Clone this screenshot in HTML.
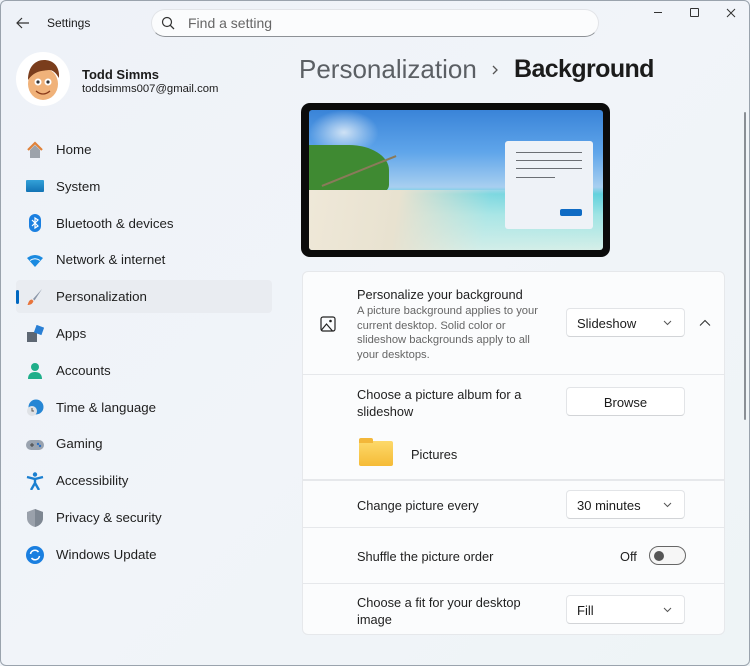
<!DOCTYPE html>
<html><head><style>
*{margin:0;padding:0;box-sizing:border-box}
body{width:750px;height:666px;overflow:hidden;font-family:"Liberation Sans",sans-serif;background:linear-gradient(135deg,#eef2f8 0%,#f1f4f9 50%,#eef4f6 100%);position:relative;color:#1b1b1b}
.abs{position:absolute}
.nav{position:absolute;left:56px;font-size:13.3px;color:#1f1f1f}
.ic{position:absolute;left:26px;width:18px;height:18px}
.card{position:absolute;left:302px;width:423px;background:#fbfcfd;border:1px solid #e6e8eb}
.t{position:absolute;left:54px;font-size:12.8px;color:#1f1f1f}
.dd{position:absolute;left:263px;width:119px;height:29px;background:#fff;border:1px solid #e2e4e7;border-bottom-color:#d2d4d7;border-radius:4px;font-size:13px;padding:7px 10px}
.dd svg{position:absolute;right:12px;top:11px}
</style></head><body>
<div class="abs" style="left:0;top:0;width:750px;height:666px;border:1px solid #9aa3ad;border-radius:6px"></div>
<svg class="abs" style="left:15px;top:16px" width="16" height="14"><path d="M14 7H2M7 2L2 7l5 5" stroke="#333" stroke-width="1.2" fill="none"/></svg>
<div class="abs" style="left:47px;top:16px;font-size:12px">Settings</div>
<div class="abs" style="left:151px;top:9px;width:448px;height:28px;background:#fbfcfd;border:1px solid #e2e4e8;border-bottom:1px solid #8d9196;border-radius:14px"></div>
<svg class="abs" style="left:161px;top:16px" width="14" height="14"><circle cx="6" cy="6" r="4.5" stroke="#333" stroke-width="1.2" fill="none"/><path d="M9.3 9.3L13 13" stroke="#333" stroke-width="1.3"/></svg>
<div class="abs" style="left:188px;top:15px;font-size:14px;color:#666">Find a setting</div>
<div class="abs" style="left:654px;top:12px;width:8px;height:1px;background:#333"></div>
<div class="abs" style="left:690px;top:8px;width:9px;height:9px;border:1px solid #333;border-radius:1px"></div>
<svg class="abs" style="left:726px;top:8px" width="10" height="10"><path d="M1 1l8 8M9 1l-8 8" stroke="#333" stroke-width="1"/></svg>
<div class="abs" style="left:16px;top:52px;width:54px;height:54px;border-radius:50%;background:#fff"></div>
<svg class="abs" style="left:16px;top:52px" width="54" height="54"><ellipse cx="27" cy="32" rx="15" ry="16" fill="#f0b27a"/><path d="M12 28c0-14 8-20 16-20s16 5 15 18c-3-5-6-8-10-8-6 1-14 0-21 10z" fill="#7a3d1c"/><circle cx="22" cy="30" r="3.5" fill="#fff"/><circle cx="32" cy="30" r="3.5" fill="#fff"/><circle cx="22" cy="30" r="1.6" fill="#333"/><circle cx="32" cy="30" r="1.6" fill="#333"/><path d="M20 39q7 6 14 0" stroke="#8a3b1b" stroke-width="1.3" fill="none"/></svg>
<div class="abs" style="left:82px;top:67px;font-size:13px;font-weight:bold">Todd Simms</div>
<div class="abs" style="left:82px;top:83px;font-size:11.3px">toddsimms007@gmail.com</div>
<div class="abs" style="left:16px;top:280px;width:256px;height:33px;background:#e9ecf1;border-radius:4px"></div>
<div class="abs" style="left:16px;top:290px;width:3px;height:14px;background:#0067c0;border-radius:2px"></div>
<svg class="ic" style="top:141px" viewBox="0 0 18 18"><path d="M2 9L9 2l7 7" stroke="#e0823a" stroke-width="2.2" fill="none"/><path d="M4 9v8h10V9L9 4z" fill="#9da3ab"/></svg>
<div class="ic" style="top:180px;height:12px;background:linear-gradient(#33a1d8,#1273b4);border-radius:1px"></div>
<svg class="ic" style="top:214px" viewBox="0 0 18 18"><rect x="3" y="0" width="12" height="18" rx="6" fill="#1a7fe0"/><path d="M6 6l6 6-3 2V4l3 2-6 6" stroke="#fff" stroke-width="1.2" fill="none"/></svg>
<svg class="ic" style="top:252px" viewBox="0 0 18 18"><path d="M1 6q8-6 16 0L9 15z" fill="#1a8ae0"/><path d="M4 8.5q5-3.5 10 0" stroke="#fff" stroke-width="1" fill="none"/></svg>
<svg class="ic" style="top:288px" viewBox="0 0 18 18"><path d="M16 1L7 11l1.5 1.5z" fill="#8b96a8"/><path d="M6 11.5l1.5 1.5c-1 3-3 4-6 4 1-2 1-5 4.5-5.5z" fill="#e8743b"/></svg>
<svg class="ic" style="top:325px" viewBox="0 0 18 18"><rect x="1" y="7" width="10" height="10" fill="#5e6773"/><rect x="9" y="1" width="8" height="8" transform="rotate(20 13 5)" fill="#2a7fd4"/></svg>
<svg class="ic" style="top:362px" viewBox="0 0 18 18"><circle cx="9" cy="5" r="4" fill="#1fae8a"/><path d="M2 17c0-5 3-7 7-7s7 2 7 7z" fill="#1fae8a"/></svg>
<svg class="ic" style="top:399px" viewBox="0 0 18 18"><circle cx="10" cy="8" r="7.5" fill="#2686d4"/><circle cx="6" cy="12" r="5" fill="#dfe2e6"/><path d="M6 9v3h2" stroke="#555" stroke-width="1" fill="none"/></svg>
<svg class="ic" style="top:436px" viewBox="0 0 18 18"><rect x="0" y="4" width="18" height="10" rx="5" fill="#9aa3af"/><circle cx="12" cy="8" r="1.2" fill="#2d6fc1"/><circle cx="14" cy="10" r="1.2" fill="#2d6fc1"/><path d="M4 9h4M6 7v4" stroke="#444" stroke-width="1"/></svg>
<svg class="ic" style="top:472px" viewBox="0 0 18 18"><circle cx="9" cy="2.5" r="2.2" fill="#1a7fd0"/><path d="M1 5l8 2 8-2M9 7v4l-4 7M9 11l4 7" stroke="#1a7fd0" stroke-width="2.4" fill="none"/></svg>
<svg class="ic" style="top:509px" viewBox="0 0 18 18"><path d="M9 0l8 3v6c0 5-4 8-8 9-4-1-8-4-8-9V3z" fill="#9aa1ab"/><path d="M9 0l8 3v6c0 5-4 8-8 9z" fill="#7e8792"/></svg>
<svg class="ic" style="top:546px" viewBox="0 0 18 18"><circle cx="9" cy="9" r="9" fill="#1a7fe0"/><path d="M4.5 8a4.5 4.5 0 0 1 8-2M13.5 10a4.5 4.5 0 0 1-8 2" stroke="#fff" stroke-width="1.5" fill="none"/></svg>
<div class="nav" style="top:142px">Home</div>
<div class="nav" style="top:179px">System</div>
<div class="nav" style="top:216px">Bluetooth &amp; devices</div>
<div class="nav" style="top:252px">Network &amp; internet</div>
<div class="nav" style="top:289px">Personalization</div>
<div class="nav" style="top:326px">Apps</div>
<div class="nav" style="top:363px">Accounts</div>
<div class="nav" style="top:400px">Time &amp; language</div>
<div class="nav" style="top:436px">Gaming</div>
<div class="nav" style="top:473px">Accessibility</div>
<div class="nav" style="top:510px">Privacy &amp; security</div>
<div class="nav" style="top:547px">Windows Update</div>
<div class="abs" style="left:299px;top:54px;font-size:26px;color:#5b5f64">Personalization</div>
<svg class="abs" style="left:490px;top:64px" width="10" height="12"><path d="M3 2l4 4-4 4" stroke="#555" stroke-width="1.3" fill="none"/></svg>
<div class="abs" style="left:514px;top:55px;font-size:25px;font-weight:bold;letter-spacing:-0.6px;color:#1b1b1b">Background</div>
<div class="abs" style="left:301px;top:103px;width:309px;height:154px;background:#0b0b0b;border-radius:9px"></div>
<div class="abs" style="left:309px;top:110px;width:294px;height:140px;border-radius:3px;overflow:hidden;background:linear-gradient(180deg,#3a84d8 0%,#5fa5ea 30%,#a8cff0 55%,#5fd0dc 60%,#9ee4e4 75%,#d6efe8 100%)">
<div class="abs" style="left:0;top:0;width:70px;height:45px;background:radial-gradient(#cfe2f5,transparent 70%)"></div>
<div class="abs" style="left:0;top:35px;width:80px;height:50px;border-radius:0 50% 20% 0;background:#3f8a32"></div>
<div class="abs" style="left:10px;top:60px;width:80px;height:2px;background:#8a7a5a;transform:rotate(-22deg)"></div>
<div class="abs" style="left:0;top:80px;width:294px;height:60px;background:linear-gradient(100deg,#efe8d8 0%,#e8e2d0 30%,rgba(200,235,235,0.3) 60%,transparent)"></div>
<div class="abs" style="left:196px;top:31px;width:88px;height:88px;background:#eef2f7;border-radius:3px"></div>
<div class="abs" style="left:207px;top:42px;width:66px;height:1px;background:#6b6f74"></div>
<div class="abs" style="left:207px;top:50px;width:66px;height:1px;background:#6b6f74"></div>
<div class="abs" style="left:207px;top:58px;width:66px;height:1px;background:#6b6f74"></div>
<div class="abs" style="left:207px;top:67px;width:39px;height:1px;background:#6b6f74"></div>
<div class="abs" style="left:251px;top:99px;width:22px;height:7px;background:#0f6bc4;border-radius:2px"></div>
</div>
<div class="card" style="top:271px;height:104px;border-radius:6px 6px 0 0">
<svg class="abs" style="left:17px;top:44px" width="16" height="16"><rect x="1" y="1" width="14" height="14" rx="2" stroke="#222" stroke-width="1.2" fill="none"/><circle cx="10.5" cy="5" r="1.3" fill="#222"/><path d="M1.5 14l5-6 6 7" stroke="#222" stroke-width="1.2" fill="none"/></svg>
<div class="t" style="top:15px">Personalize your background</div>
<div class="t" style="top:32px;font-size:11.2px;color:#666;line-height:14.6px;width:190px">A picture background applies to your current desktop. Solid color or slideshow backgrounds apply to all your desktops.</div>
<div class="dd" style="top:36px">Slideshow<svg width="9" height="6"><path d="M1 1l3.5 3.5L8 1" stroke="#555" fill="none"/></svg></div>
<svg class="abs" style="left:396px;top:47px" width="12" height="8"><path d="M1 6.5l5-5 5 5" stroke="#333" stroke-width="1.1" fill="none"/></svg>
</div>
<div class="card" style="top:374px;height:106px">
<div class="t" style="top:11px;line-height:17px;width:190px">Choose a picture album for a slideshow</div>
<div class="dd" style="top:12px;text-align:center;padding-left:0;padding-right:0">Browse</div>
<div class="abs" style="left:56px;top:66px;width:34px;height:25px;background:linear-gradient(#fdd96a,#f5bb37);border-radius:2px"></div>
<div class="abs" style="left:56px;top:63px;width:14px;height:5px;background:#f3b73a;border-radius:2px 2px 0 0"></div>
<div class="t" style="left:108px;top:72px">Pictures</div>
</div>
<div class="card" style="top:480px;height:48px">
<div class="t" style="top:17px">Change picture every</div>
<div class="dd" style="top:9px">30 minutes<svg width="9" height="6"><path d="M1 1l3.5 3.5L8 1" stroke="#555" fill="none"/></svg></div>
</div>
<div class="card" style="top:527px;height:57px">
<div class="t" style="top:21px">Shuffle the picture order</div>
<div class="t" style="left:317px;top:21px">Off</div>
<div class="abs" style="left:346px;top:18px;width:37px;height:19px;border:1px solid #666;border-radius:10px;background:#f6f6f6"></div>
<div class="abs" style="left:351px;top:23px;width:10px;height:10px;border-radius:50%;background:#555"></div>
</div>
<div class="card" style="top:583px;height:52px;border-radius:0 0 6px 6px">
<div class="t" style="top:10px;line-height:17px;width:190px">Choose a fit for your desktop image</div>
<div class="dd" style="top:11px">Fill<svg width="9" height="6"><path d="M1 1l3.5 3.5L8 1" stroke="#555" fill="none"/></svg></div>
</div>
<div class="abs" style="left:744px;top:112px;width:2px;height:308px;background:#8a8f95;border-radius:1px"></div>
</body></html>
